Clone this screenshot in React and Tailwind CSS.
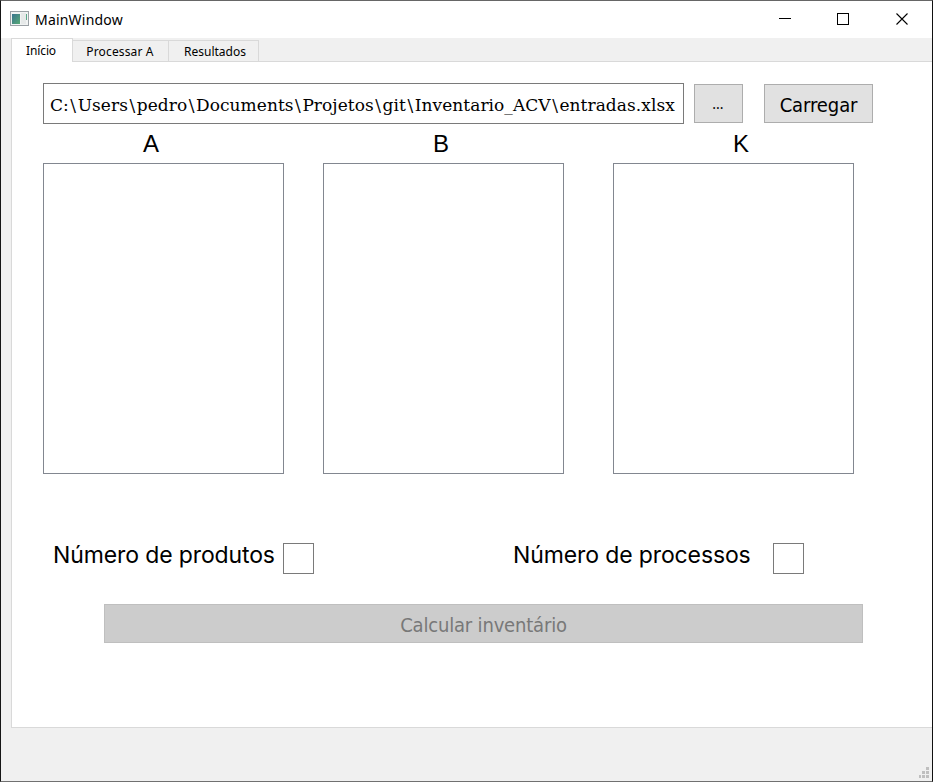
function TitleBar() {
  return (
    <header className="flex h-[37px] shrink-0 items-center bg-white pl-[9px]">
      <svg width="20" height="17" viewBox="0 0 20 17" className="shrink-0">
        <defs>
          <linearGradient id="app" x1="0" y1="0" x2="1" y2="1">
            <stop offset="0" stopColor="#39748f" />
            <stop offset="1" stopColor="#58aa75" />
          </linearGradient>
        </defs>
        <rect x="0.5" y="0.5" width="18" height="14" fill="#f1f3f3" stroke="#9ba1a6" />
        <rect x="2" y="3" width="8" height="10" fill="url(#app)" />
        <rect x="11" y="2" width="5" height="11" fill="#e6e9e9" />
        <rect x="16" y="3" width="1" height="6" fill="#5ba889" />
      </svg>
      <h1 className="ml-[5px] whitespace-nowrap font-['Noto_Sans',sans-serif] text-[14px] leading-5 tracking-[0.2px] text-black">MainWindow</h1>
      <div className="ml-auto mr-[23px] flex items-center gap-[46px]">
        <svg width="13" height="13" shapeRendering="crispEdges" className="relative left-px"><path d="M0 5.5h12" stroke="#000" /></svg>
        <svg width="13" height="13" shapeRendering="crispEdges"><rect x="0.5" y="0.5" width="11" height="11" fill="none" stroke="#000" /></svg>
        <svg width="13" height="13"><path d="M0.5 0.5l11 11M11.5 0.5L0.5 11.5" stroke="#000" strokeWidth="1.1" /></svg>
      </div>
    </header>
  );
}

function Tabs() {
  const tab = "h-[21px] border-t border-r border-[#d9d9d9] bg-[#f0f0f0] pt-[3px] text-center";
  return (
    <nav className="flex h-[23px] shrink-0 items-end whitespace-nowrap pl-[10px] font-['Noto_Sans',sans-serif] text-[12px] leading-4 text-black">
      <div className="relative z-10 -mb-px h-6 w-[62px] border-x border-t border-[#d9d9d9] bg-white pt-[4px] pr-[2px] text-center tracking-[-0.1px]">Início</div>
      <div className={tab + " w-[96px] pr-px tracking-[0.15px]"}>Processar A</div>
      <div className={tab + " w-[90px] pl-[3px]"}>Resultados</div>
    </nav>
  );
}

const filePath = ["C:", "Users", "pedro", "Documents", "Projetos", "git", "Inventario_ACV", "entradas.xlsx"];

const matrices = [
  { name: "A", cell: "w-[241px]", label: "pl-[100px]" },
  { name: "B", cell: "ml-[39px] w-[241px]", label: "pl-[110px]" },
  { name: "K", cell: "ml-[49px] w-[241px]", label: "pl-[120px]" },
];

export default function App() {
  return (
    <div className="flex h-[782px] w-[933px] flex-col overflow-hidden border border-t-[#666] border-r-[#111] border-b-[#707070] border-l-[#151515] bg-[#f0f0f0]">
      <TitleBar />
      <Tabs />
      <main className="ml-[10px] flex h-[667px] shrink-0 flex-col border-y border-l border-[#d9d9d9] bg-white pl-[31px] pt-[21px] text-black">
        <div className="flex h-[41px] shrink-0 items-center">
          <div className="flex h-[41px] w-[641px] items-center border border-[#7a7a7a] pl-[6px] pt-[2px]">
            <span className="whitespace-nowrap font-['DejaVu_Serif',serif] text-[17px] leading-6 tracking-[0.06px]">
              {filePath.map((part, i) => (
                <span key={part}>
                  {i > 0 && <span className="px-[1.5px]">{"\\"}</span>}
                  {part}
                </span>
              ))}
            </span>
          </div>
          <button className="ml-[10px] h-[39px] w-[49px] border border-[#adadad] bg-[#e1e1e1] pr-px font-['Noto_Sans',sans-serif] text-[14px]">...</button>
          <button className="ml-[21px] h-[39px] w-[109px] border border-[#adadad] bg-[#e1e1e1] pt-[2px] font-['DejaVu_Sans_Condensed','DejaVu_Sans',sans-serif] text-[20px] tracking-[-0.1px]">Carregar</button>
        </div>
        <div className="flex shrink-0">
          {matrices.map((m) => (
            <section key={m.name} className={m.cell}>
              <h2 className={"h-[39px] pt-[5px] font-['Liberation_Sans',sans-serif] text-[24px] leading-[30px] " + m.label}>{m.name}</h2>
              <div className="h-[311px] border border-[#828790]" />
            </section>
          ))}
        </div>
        <div className="mt-[69px] flex h-[31px] shrink-0 whitespace-nowrap pl-[10px] font-['Inter',sans-serif] text-[23px] leading-[24px] tracking-[-0.12px]">
          <div className="w-[230px]">Número de produtos</div>
          <div className="h-[31px] w-[31px] border border-[#7a7a7a]" />
          <div className="ml-[199px] w-[260px]">Número de processos</div>
          <div className="h-[31px] w-[31px] border border-[#7a7a7a]" />
        </div>
        <button disabled className="ml-[61px] mt-[30px] h-[39px] w-[759px] shrink-0 border border-[#bfbfbf] bg-[#cccccc] pt-[2px] font-['DejaVu_Sans_Condensed','DejaVu_Sans',sans-serif] text-[20px] tracking-[-0.18px] text-[#787878]">Calcular inventário</button>
      </main>
      <footer className="flex flex-1 items-end justify-end pb-[2px] pr-[3px]">
        <svg width="11" height="12" fill="#bfbfbf" shapeRendering="crispEdges">
          <path d="M8 0h3v3h-3zM4 4h3v3h-3zM8 4h3v3h-3zM1 8h2v3h-2zM4 8h3v3h-3zM8 8h3v3h-3z" />
        </svg>
      </footer>
    </div>
  );
}
